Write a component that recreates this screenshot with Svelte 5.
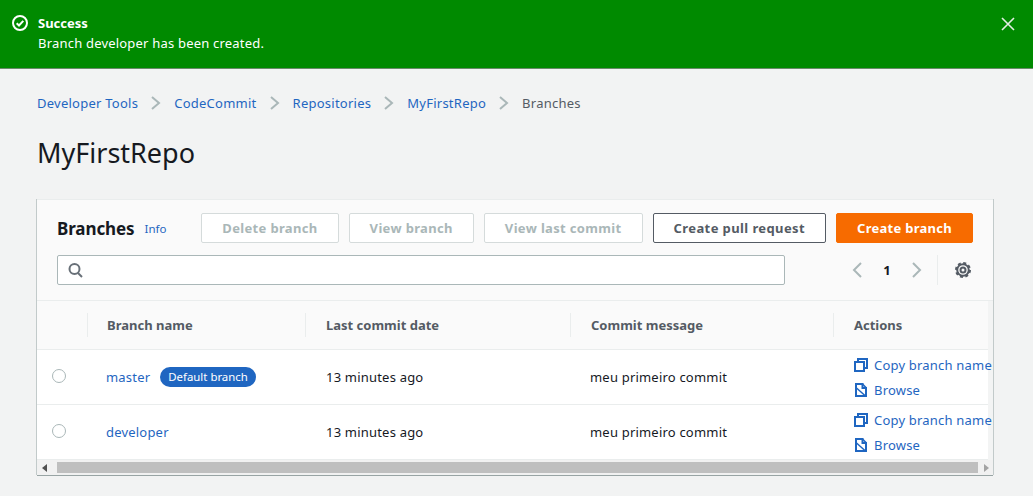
<script>
	const crumbs = ['Developer Tools', 'CodeCommit', 'Repositories', 'MyFirstRepo'];
	const disabled = ['Delete branch', 'View branch', 'View last commit'];
	const columns = ['Branch name', 'Last commit date', 'Commit message', 'Actions'];
	const branches = [
		{ name: 'master', isDefault: true },
		{ name: 'developer', isDefault: false }
	];
</script>

<div class="flash">
	<svg class="flash-icon" width="16" height="16" viewBox="0 0 16 16" fill="none" stroke="#fff" stroke-width="2">
		<circle cx="8" cy="8" r="7" />
		<path d="M4.7 8.2 7 10.5l4.3-4.6" />
	</svg>
	<div class="flash-text">
		<div class="flash-title">Success</div>
		<div>Branch developer has been created.</div>
	</div>
	<svg class="flash-close" width="14" height="14" viewBox="0 0 14 14" fill="none" stroke="#e4eee4" stroke-width="1.6">
		<path d="M1 1l12 12M13 1 1 13" />
	</svg>
</div>

<main>
	<nav class="crumbs">
		{#each crumbs as crumb}
			<a href="#top">{crumb}</a>
			<svg width="12" height="16" viewBox="0 0 12 16" fill="none" stroke="#aab7b8" stroke-width="2">
				<path d="M2 2l7 6-7 6" />
			</svg>
		{/each}
		<span class="current">Branches</span>
	</nav>

	<h1>MyFirstRepo</h1>

	<section class="card">
		<header class="card-head">
			<div class="title-row">
				<h2>Branches</h2>
				<a class="info" href="#top">Info</a>
				<div class="actions">
					{#each disabled as label}
						<button class="btn" disabled>{label}</button>
					{/each}
					<button class="btn normal">Create pull request</button>
					<button class="btn primary">Create branch</button>
				</div>
			</div>
			<div class="tools">
				<div class="search">
					<svg width="15" height="15" viewBox="0 0 15 15" fill="none" stroke="#687078" stroke-width="2">
						<circle cx="6.500" cy="6" r="5" />
						<path d="M10 10l4 4" />
					</svg>
				</div>
				<div class="pager">
					<svg width="12" height="16" viewBox="0 0 12 16" fill="none" stroke="#aab7b8" stroke-width="2">
						<path d="M10 1 3 8l7 7" />
					</svg>
					<span class="page">1</span>
					<svg width="12" height="16" viewBox="0 0 12 16" fill="none" stroke="#aab7b8" stroke-width="2">
						<path d="M2 1l7 7-7 7" />
					</svg>
				</div>
				<div class="settings">
					<svg width="16" height="16" viewBox="0 0 16 16" fill="none" stroke="#545b64">
						<circle cx="8" cy="8" r="2.500" stroke-width="2" />
						<circle cx="8" cy="8" r="5.800" stroke-width="2" />
						<circle cx="8" cy="8" r="7" stroke-width="2" stroke-dasharray="3 2.500" />
					</svg>
				</div>
			</div>
		</header>

		<div class="table">
			<div class="row head">
				<div class="cell select"></div>
				{#each columns as col}
					<div class="cell"><span class="sep"></span>{col}</div>
				{/each}
			</div>
			{#each branches as branch}
				<div class="row">
					<div class="cell select"><span class="radio"></span></div>
					<div class="cell">
						<a href="#top">{branch.name}</a>
						{#if branch.isDefault}
							<span class="badge">Default branch</span>
						{/if}
					</div>
					<div class="cell">13 minutes ago</div>
					<div class="cell">meu primeiro commit</div>
					<div class="cell links">
						<a href="#top">
							<svg width="14" height="14" viewBox="0 0 14 14" fill="none" stroke="#1f66c1" stroke-width="2">
								<rect x="1" y="4" width="9" height="9" />
								<path d="M4 3V1h9v9h-2" />
							</svg>
							Copy branch name
						</a>
						<a href="#top">
							<svg width="14" height="14" viewBox="0 0 14 14" fill="none" stroke="#1f66c1" stroke-width="2">
								<path d="M2 1h6.500v4H12v8H2z" />
								<path d="M2.500 5l9 8M8.500 1 12 4.500" stroke-width="1.500" />
							</svg>
							Browse
						</a>
					</div>
				</div>
			{/each}
		</div>

		<div class="scrollbar">
			<span class="arrow left"></span>
			<span class="thumb"></span>
			<span class="arrow right"></span>
		</div>
	</section>
</main>

<style>
	:global(body) {
		background: #f2f3f3;
		font-family: "Noto Sans", sans-serif;
		font-size: 13px;
		letter-spacing: 0.2px;
		color: #16191f;
	}
	a {
		color: #1f66c1;
		text-decoration: none;
	}
	.flash {
		padding: 15px 16px 0 12px;
		display: flex;
		background: #008a00;
		border-bottom: 1px solid #6b8a6b;
		height: 53px;
		color: #fff;
		line-height: 20px;
	}
	.flash-text {
		flex: 1;
		margin-left: 10px;
		margin-top: -2px;
	}
	.flash-title {
		font-weight: 700;
		letter-spacing: 0;
	}
	.flash-close {
		margin: 2px 2px 0 0;
	}
	main {
		padding: 0 40px 8px 37px;
	}
	.crumbs {
		display: flex;
		align-items: center;
		gap: 12px;
		height: 20px;
		margin-top: 24px;
		letter-spacing: 0.25px;
	}
	.current {
		color: #545b64;
	}
	h1 {
		font-size: 27px;
		font-weight: 400;
		letter-spacing: 0;
		line-height: 36px;
		margin: 22px 0 0;
	}
	.card {
		margin-top: 28px;
		background: #f3f4f4;
		border-top: 1px solid #eaeded;
		box-sizing: border-box;
		box-shadow: 0 1px 0 0 #98a4a4, 1px 0 0 0 #c2caca, -1px 0 0 0 #c2caca;
		height: 276px;
		overflow: hidden;
		display: flex;
		flex-direction: column;
	}
	.card-head {
		height: 101px;
		background: #fafafa;
		box-sizing: border-box;
		padding: 13px 20px 0;
		border-bottom: 1px solid #eaeded;
	}
	.title-row {
		display: flex;
		align-items: center;
		height: 30px;
	}
	h2 {
		font-size: 17px;
		font-weight: 700;
		letter-spacing: -0.1px;
		margin: 0;
	}
	.info {
		font-size: 11.5px;
		letter-spacing: 0;
		margin-left: 10px;
	}
	.actions {
		margin-left: auto;
		display: flex;
		gap: 10px;
	}
	.btn {
		height: 30px;
		padding: 0 20px;
		font: 700 13px "Noto Sans", sans-serif;
		letter-spacing: 0.34px;
		border-radius: 2px;
		background: #fff;
		border: 1px solid #d5dbdb;
		color: #aab7b8;
	}
	.btn.normal {
		letter-spacing: 0.4px;
		border-color: #545b64;
		color: #545b64;
	}
	.btn.primary {
		letter-spacing: 0.27px;
		background: #f76b00;
		border-color: #f76b00;
		color: #fff;
	}
	.tools {
		display: flex;
		align-items: center;
		margin-top: 12px;
		height: 30px;
	}
	.search {
		width: 728px;
		height: 30px;
		box-sizing: border-box;
		border: 1px solid #aab7b8;
		border-radius: 2px;
		background: #fff;
		padding-left: 10px;
		display: flex;
		align-items: center;
	}
	.pager {
		margin-left: 66px;
		display: flex;
		align-items: center;
	}
	.page {
		width: 48px;
		text-align: center;
		font-weight: 700;
	}
	.settings {
		margin-left: 14px;
		padding-left: 17px;
		height: 30px;
		display: flex;
		align-items: center;
		border-left: 1px solid #eaeded;
	}
	.table {
		margin-right: 5px;
		background: #fff;
	}
	.row {
		display: grid;
		grid-template-columns: 50px 218px 265px 263px 160px;
		height: 55px;
		border-bottom: 1px solid #eaeded;
		box-sizing: border-box;
	}
	.row.head {
		height: 49px;
		background: #fafafa;
		font-weight: 700;
		letter-spacing: 0;
		color: #545b64;
	}
	.cell {
		position: relative;
		padding-left: 21px;
		display: flex;
		align-items: center;
		white-space: nowrap;
		overflow: hidden;
	}
	.head .cell:nth-child(2) {
		padding-left: 20px;
	}
	.row:not(.head) .cell:nth-child(2) {
		padding-left: 19px;
	}
	.row:not(.head) .cell:nth-child(4) {
		padding-left: 20px;
	}
	.cell.select {
		padding-left: 15px;
	}
	.sep {
		position: absolute;
		left: 0;
		top: 12px;
		height: 24px;
		border-left: 1px solid #eaeded;
	}
	.radio {
		width: 12px;
		height: 12px;
		border: 1px solid #aab7b8;
		border-radius: 50%;
		margin-top: -3px;
	}
	.badge {
		margin-left: 10px;
		background: #1f66c1;
		color: #fff;
		font-size: 11.4px;
		letter-spacing: 0;
		line-height: 20px;
		padding: 0 8px;
		border-radius: 10px;
	}
	.links {
		flex-direction: column;
		align-items: flex-start;
		justify-content: center;
		gap: 5px;
		line-height: 20px;
	}
	.links a {
		display: flex;
		align-items: center;
		gap: 6px;
	}
	.scrollbar {
		flex: 1;
		display: flex;
		align-items: center;
		background: #f1f1f1;
		padding: 0 4px 0 3px;
		gap: 3px;
	}
	.thumb {
		flex: 1;
		height: 11px;
		margin: 0 3px 0 7px;
		background: #bfbfbf;
	}
	.arrow {
		width: 0;
		height: 0;
		border-top: 4px solid transparent;
		border-bottom: 4px solid transparent;
	}
	.arrow.left {
		margin-left: 2px;
		border-right: 5px solid #505050;
	}
	.arrow.right {
		border-left: 5px solid #a3a3a3;
	}
</style>
